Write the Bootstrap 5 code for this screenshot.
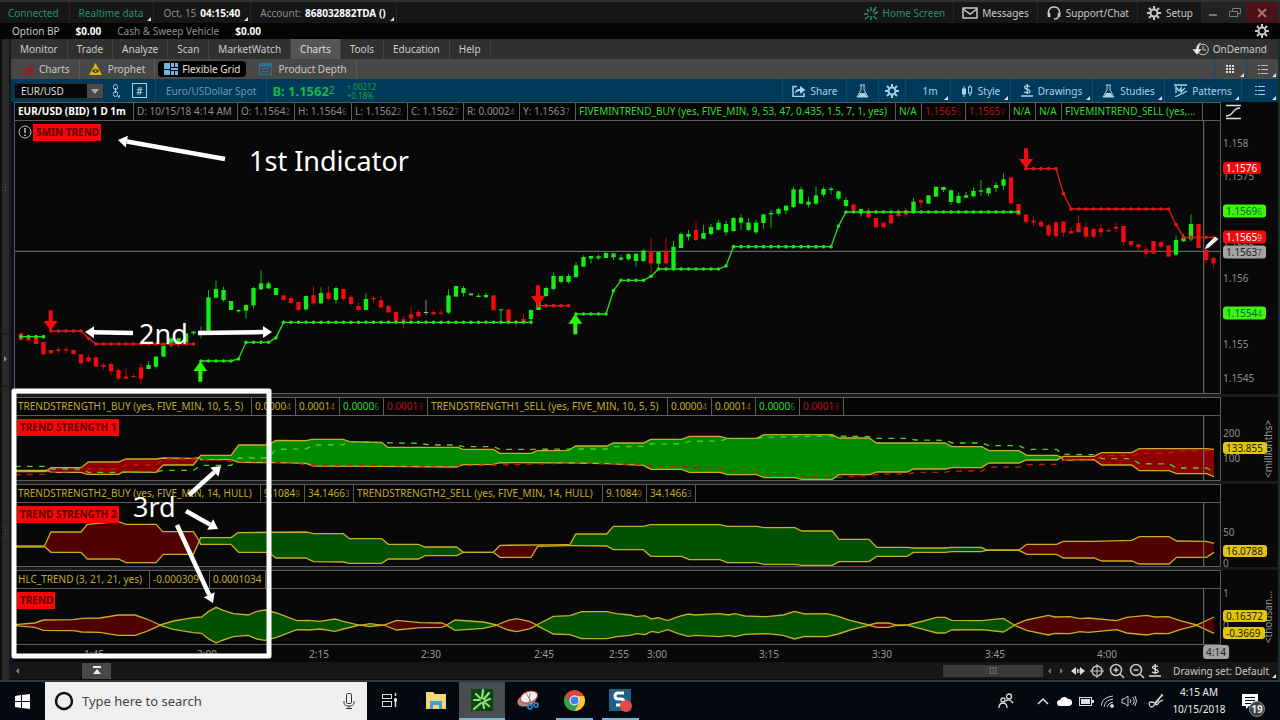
<!DOCTYPE html>
<html lang="en">
<head>
<meta charset="utf-8">
<meta name="viewport" content="width=device-width, initial-scale=1">
<title>Charts - Flexible Grid</title>
<link href="https://cdn.jsdelivr.net/npm/bootstrap@5.3.0/dist/css/bootstrap.min.css" rel="stylesheet">
<style>
:root{--line:#5c5c5c;--ink:#c9c9c9;--dim:#8c8c8c}
body{background:#080808;color:var(--ink);font:10px/14px "Noto Sans","Open Sans",sans-serif}
button,select,input{font:inherit;color:inherit}
a{color:inherit;text-decoration:none}
.bare{background:none;border:0;padding:0;white-space:nowrap;line-height:14px}
svg{display:block;flex:none}
.ico{width:16px;height:16px;fill:none;stroke:currentColor;stroke-width:1.5}
.statusbar{height:23px;border-top:2px solid #303030;background:#161616}
.statusbar .seg{height:100%;border-right:1px solid #262626;padding:0 10px 0 9px;position:relative;white-space:nowrap}
.statusbar .seg.act{padding:0 8px}
.seg.tick::after,.tool.tick::after,.setname::after{content:"";position:absolute;right:2px;bottom:2px;border-left:4px solid transparent;border-bottom:4px solid #ddd}
.setname{position:relative;padding-right:9px;height:18px}
.teal{color:#2b8f6a}
.bright{color:#fff;font-weight:700}
.winbtn{background:#222;color:#777;width:22px;height:100%;border:0;padding:0}
.winbtn.close-win{background:#4b1217;color:#a87075;width:32px}
.fundsbar{height:16px;background:#050505;padding:0 10px 0 12px}
.rail{width:11px;background:#292929;border-left:2px solid #101010;border-right:2px solid #191919}
.edge{width:2px;background:#1c2e2a}
.menu{height:20px;background:#303030}
.menu .tab{height:100%;padding:0 9px;border-right:1px solid #424242;color:#ccc}
.menu .tab.on{background:#555;color:#ddd}
.menu .demand{margin-right:11px}
.submenu{height:20px;background:#484848;color:#c8c8c8}
.submenu .tab{height:100%;padding:0 9px;border-right:1px solid #585858;gap:6px}
.submenu .tab.on{background:#000;border-radius:4px;height:16px;margin:2px 4px 2px 3px;color:#e4e4e4;border:0;padding:0 6px;gap:4px}
.toolbar{height:23px;background:#003a5a;color:#a9d2ea}
.tool{height:100%;border-left:1px solid #0c4c70;position:relative;gap:5px}
.t64{width:64px}.t32{width:32px}.t27{width:27px}.t45{width:45px}.t60{width:60px}.t82{width:82px}.t72{width:72px}.t77{width:77px}.t37{width:37px}
.symbol{width:90px;height:16px;background:#080808 linear-gradient(#4a4a4a,#4a4a4a) right/16px 100% no-repeat;border:1px solid #1d2c36;border-radius:0;padding:0 0 0 6px;appearance:none;color:#ddd;line-height:14px}
.pick{position:relative;margin-left:3px}
.pick::after{content:"";position:absolute;right:5px;top:6px;border:4px solid transparent;border-top:5px solid #aaa;border-bottom:0}
.hash{width:15px;height:15px;border:1px solid #a9d2ea;color:#d8ecf8;line-height:12px;margin-left:12px}
.instrument{color:#6b9ab5;padding:0 10px;margin-left:8px}
.quote{color:#18b848;font-weight:700;font-size:13px;padding:0 12px 0 5px}
.quote sup{font-size:10px;top:-2px;font-weight:400}
.delta{color:#18a048;font-size:8px;line-height:9px;gap:0}
.chartarea{background:#06102a;padding-left:3px;position:relative}
.strip{background:#1b1b1b;height:3px}
.plot{border:1px solid var(--line);border-top:0;background:#080808;position:relative;min-width:0}
.plot svg{position:absolute;inset:0;width:100%;height:100%}
.plot svg.alert-mark{width:14px;height:14px;left:3px;top:4px}
.legend-row{height:19px}
.legend-row .plot{border-top:1px solid var(--line);background:#050505}
.cell{border-right:1px solid var(--line);padding-left:3px;height:100%;white-space:nowrap;overflow:hidden;line-height:17px;flex:none}
.cell small{font-size:8px;opacity:.6}
.scale{width:57px;background:#080808;position:relative;color:var(--dim)}
.scale span{position:absolute;left:2px;transform:translateY(-50%);line-height:12px;white-space:nowrap}
.scale .tag{border-radius:3px;padding:0 4px 0 3px;left:2px;min-width:38px;z-index:1}
.tag small{font-size:8px;opacity:.7}
.tr{background:#f40a0a;color:#fff}.tg{background:#3cf50a;color:#063}.tw{background:#a3a3a3;color:#222}.ty{background:#e2c60c;color:#221c00}
.scale .upright{left:41px;top:50%;writing-mode:vertical-rl;transform:translateY(-50%) rotate(180deg);color:#999}
.c-y{color:#c2ac28}.c-g{color:#34d834}.c-r{color:#b81218}.c-d{color:var(--dim)}
.w119{width:119px}.w104{width:104px}.w57{width:57px}.w56{width:56px}.w320{width:320px}.w26{width:26px}.w44{width:44px}.w141{width:141px}.w237{width:237px}.w240{width:240px}.w246{width:246px}.w249{width:249px}.w49{width:49px}.w135{width:135px}.w60{width:60px}
.flag{position:absolute;left:2px;top:3px;background:#f80505;color:#5c0000;font-weight:700;padding:0 2px 0 3px;line-height:17px;z-index:1}
.pane-price{flex:1 0 273px}
.pane-a{height:65px}.pane-b{height:64px}.pane-c{height:56px}
.times{height:17px;background:#080808;position:relative;color:#999}
.times span{position:absolute;top:2px;transform:translateX(-50%)}
.times .now{background:#a3a3a3;color:#222;border-radius:3px;padding:0 3px;top:0}
.notes{position:absolute;inset:0;width:100%;height:100%;z-index:3;pointer-events:none}
.note{position:absolute;z-index:4;color:#fff;font-size:27px;line-height:32px;white-space:nowrap;transform:translateY(-50%)}
.scroller{height:18px;background:#161616;border-bottom:1px solid #0a0a0a}
.upbtn{width:29px;height:16px;background:#484848;color:#ddd;border:0;padding:0;margin-left:62px}
.thumb{width:100px;height:12px;background:#3a3a3a;color:#777;font-size:8px;line-height:11px}
.taskbar{height:40px;border-top:2px solid #35353a;background:#03090e;color:#eee}
.start{width:45px}
.search{width:322px;background:#f0f0f0;color:#333;padding:0 12px 0 9px;gap:8px}
.search input{background:none;border:0;font-size:13px;line-height:18px;padding:0;min-width:0;outline:0}
.search input::placeholder{color:#444;opacity:1}
.app{width:46px;background:none;border:0;padding:0 0 2px}
.app.run{background:linear-gradient(#76b5e4,#76b5e4) center bottom/37px 2px no-repeat}
.app.run.on{background:#4a4d50;box-shadow:inset 0 -2px #76b5e4}
.tray{gap:7px}
.clock{width:56px;line-height:17px}
.notify{margin:0 22px 0 8px}
.badge19{position:absolute;right:-7px;bottom:-8px;width:16px;height:16px;border-radius:50%;background:#3c4145;border:1px solid #888;line-height:14px;font-weight:700}
</style>
</head>
<body>
<div class="d-flex flex-column min-vh-100">

<header class="statusbar d-flex align-items-center">
  <div class="seg d-flex align-items-center teal ps-2">Connected</div>
  <div class="seg tick d-flex align-items-center teal">Realtime data</div>
  <div class="seg tick d-flex align-items-center gap-1"><span class="c-d">Oct, 15</span><span class="bright">04:15:40</span></div>
  <div class="seg tick d-flex align-items-center gap-1"><span class="c-d">Account:</span><span class="bright">868032882TDA ()</span></div>
  <a href="#" class="seg act d-flex align-items-center gap-1 teal ms-auto"><svg class="ico" viewBox="0 0 16 16"><path d="M8 6V2M10 7l3-5M11 9l4-2M10 11l4 3M8 11v4M6 11l-4 3M5 9H1M6 7L4 4"/></svg>Home Screen</a>
  <button class="bare seg act d-flex align-items-center gap-1 h-100"><svg class="ico" viewBox="0 0 16 16"><rect x="1" y="3" width="14" height="10"/><path d="M1 4l7 5 7-5"/></svg>Messages</button>
  <button class="bare seg act d-flex align-items-center gap-1"><svg class="ico" viewBox="0 0 16 16"><path d="M4 12C1 9 2 2 8 2s7 7 4 10M12 12c0 2-2 2-4 2" /><path d="M3 8v4M13 8v4" stroke-width="2.5"/></svg>Support/Chat</button>
  <button class="bare seg act d-flex align-items-center gap-1"><svg class="ico" viewBox="0 0 16 16"><circle cx="8" cy="8" r="3.5" stroke-width="2"/><path d="M8 1v3M8 12v3M1 8h3M12 8h3M3 3l2 2M11 11l2 2M13 3l-2 2M5 11l-2 2" stroke-width="2"/></svg>Setup</button>
  <button class="winbtn d-flex align-items-center justify-content-center" aria-label="Minimize"><svg width="10" height="10"><path d="M1 7h8" stroke="currentColor" stroke-width="2"/></svg></button>
  <button class="winbtn d-flex align-items-center justify-content-center" aria-label="Restore"><svg width="12" height="10" fill="none" stroke="currentColor"><path d="M3.500 3.500v-3h8v5h-3"/><rect x=".5" y="3.500" width="8" height="5"/></svg></button>
  <button class="winbtn close-win d-flex align-items-center justify-content-center" aria-label="Close"><svg width="10" height="10"><path d="M1 1l8 8M9 1l-8 8" stroke="currentColor" stroke-width="2"/></svg></button>
  <div class="edge h-100"></div>
</header>

<div class="fundsbar d-flex align-items-center">
  <span>Option BP</span><span class="bright ms-3">$0.00</span>
  <span class="c-d ms-3">Cash &amp; Sweep Vehicle</span><span class="bright ms-3">$0.00</span>
  <button class="bare ms-auto" aria-label="Settings"><svg class="ico" viewBox="0 0 16 16"><circle cx="8" cy="8" r="3.500" stroke-width="2"/><path d="M8 1v3M8 12v3M1 8h3M12 8h3M3 3l2 2M11 11l2 2M13 3l-2 2M5 11l-2 2" stroke-width="2"/></svg></button>
</div>

<div class="d-flex flex-grow-1">
  <div class="rail"><svg width="7" height="641"><g stroke="#151515"><path d="M0 294.500h7M0 347.500h7"/></g><path d="M2 317l3 3-3 3z" fill="#888"/><path d="M3.500 142v12M3.500 488v12" stroke="#555" stroke-dasharray="1 2"/></svg></div>
  <main class="d-flex flex-column flex-grow-1 overflow-hidden">

    <nav class="menu d-flex align-items-center">
      <a href="#" class="tab d-flex align-items-center">Monitor</a><a href="#" class="tab d-flex align-items-center">Trade</a><a href="#" class="tab d-flex align-items-center">Analyze</a><a href="#" class="tab d-flex align-items-center">Scan</a><a href="#" class="tab d-flex align-items-center">MarketWatch</a><a href="#" class="tab on d-flex align-items-center">Charts</a><a href="#" class="tab d-flex align-items-center">Tools</a><a href="#" class="tab d-flex align-items-center">Education</a><a href="#" class="tab d-flex align-items-center">Help</a>
      <button class="bare demand d-flex align-items-center gap-1 ms-auto"><svg width="17" height="14" viewBox="0 0 17 14" fill="none" stroke="currentColor"><circle cx="11" cy="7.500" r="5.300"/><path d="M11 4v4h3"/><path d="M10 0C6 1 4 4 4 7H0l5 6 5-6H7c0-3 1-5 3-7z" fill="#e8e8e8" stroke="#303030" stroke-width=".5"/></svg>OnDemand</button>
    </nav>

    <nav class="submenu d-flex align-items-center">
      <a href="#" class="tab d-flex align-items-center"><svg width="13" height="12" fill="#8d2228"><path d="M0 12V9h3v3zM3.500 12V6h3v6zM7 12V4h2v8zM10 12V0h3v12z"/></svg>Charts</a>
      <a href="#" class="tab d-flex align-items-center"><svg width="13" height="12"><path d="M6.500 0L13 12H0z" fill="#d8b800"/><path d="M3 8q3.500-4 7 0-3.500 4-7 0z" fill="#3a3000"/><circle cx="6.500" cy="8" r="1" fill="#d8b800"/></svg>Prophet</a>
      <a href="#" class="tab on d-flex align-items-center"><svg width="14" height="12" fill="#6cb8e0"><path d="M0 0h6v6H0zM0 7h6v5H0zM7 0h3v4H7zM11 0h3v4h-3zM7 5h7v2H7zM7 8h3v4H7zM11 8h3v4h-3z"/></svg>Flexible Grid</a>
      <a href="#" class="tab d-flex align-items-center"><svg width="13" height="12" fill="none" stroke="#26749c"><rect x=".5" y=".5" width="12" height="11"/><path d="M0 2h13" stroke-width="3"/><path d="M3 5.500h7M3 8.500h7"/></svg>Product Depth</a>
      <button class="bare tool tick t32 ms-auto d-flex align-items-center justify-content-center" aria-label="Grid layout"><svg width="9" height="9" fill="#ddd"><path d="M0 0h2v2H0zM3 0h2v2H3zM6 0h2v2H6zM0 3h2v2H0zM3 3h2v2H3zM6 3h2v2H6zM0 6h2v2H0zM3 6h2v2H3zM6 6h2v2H6z"/></svg></button>
      <button class="bare tool tick t32 d-flex align-items-center justify-content-center" aria-label="List"><svg width="10" height="9" fill="#bbb"><path d="M0 0h2v1H0zM3 0h7v1H3zM0 4h2v1H0zM3 4h7v1H3zM0 8h2v1H0zM3 8h7v1H3z"/></svg></button>
    </nav>

    <div class="toolbar d-flex align-items-center">
      <div class="pick"><select class="symbol" aria-label="Symbol"><option>EUR/USD</option></select></div>
      <svg class="ms-2" width="8" height="14" fill="none" stroke="#a9d2ea"><rect x="1.500" y=".5" width="4" height="5" rx="2"/><rect x="1.500" y="7.500" width="4" height="5" rx="2"/><path d="M3.500 4v5M6 13l2-2v2z"/></svg>
      <button class="bare hash text-center">#</button>
      <span class="tool instrument d-flex align-items-center">Euro/USDollar Spot</span>
      <span class="tool quote d-flex align-items-center"><span>B: 1.1562<sup>2</sup></span></span>
      <span class="tool delta d-flex flex-column justify-content-center border-0"><span>+.00212</span><span>+0.18%</span></span>
      <button class="bare tool t64 d-flex align-items-center justify-content-center ms-auto"><svg width="14" height="12" fill="none" stroke="currentColor" stroke-width="1.500"><path d="M5 1.500H1v10h11V8"/><path d="M3 9c0-4 2-5 5-5V1l5.500 4L8 9V6C6 6 4 7 3 9z" fill="currentColor" stroke="none"/></svg>Share</button>
      <button class="bare tool t32 d-flex align-items-center justify-content-center" aria-label="Studies menu"><svg width="13" height="14"><path d="M4 1h5M5 1v5L1 13h11L8 6V1" fill="none" stroke="currentColor"/><path d="M4 9h5l2 4H2z" fill="currentColor"/></svg></button>
      <button class="bare tool t27 d-flex align-items-center justify-content-center" aria-label="Chart settings"><svg class="ico" viewBox="0 0 16 16"><circle cx="8" cy="8" r="3.500" stroke-width="2"/><path d="M8 1v3M8 12v3M1 8h3M12 8h3M3 3l2 2M11 11l2 2M13 3l-2 2M5 11l-2 2" stroke-width="2"/></svg></button>
      <button class="bare tool tick t45 d-flex align-items-center justify-content-center ps-1">1m</button>
      <button class="bare tool tick t60 d-flex align-items-center justify-content-center"><svg width="12" height="12" fill="none" stroke="currentColor"><path d="M3 1v11M9 0v2M9 8v3"/><rect x="1.500" y="4" width="3" height="5" fill="currentColor"/><rect x="7.500" y="2" width="3" height="6"/></svg>Style</button>
      <button class="bare tool tick t82 d-flex align-items-center justify-content-center"><svg width="12" height="13" fill="none" stroke="currentColor"><path d="M9 2.500C7 1.500 3.500 1.500 3.500 3.500S9 5 9 7.200 5 9 3 8M6.200 0v10M0 12h12" stroke-width="1.300"/></svg>Drawings</button>
      <button class="bare tool tick t72 d-flex align-items-center justify-content-center"><svg width="13" height="14"><path d="M4 1h5M5 1v5L1 13h11L8 6V1" fill="none" stroke="currentColor"/><path d="M4 9h5l2 4H2z" fill="currentColor"/></svg>Studies</button>
      <button class="bare tool tick t77 d-flex align-items-center justify-content-center"><svg width="13" height="13" fill="none" stroke="currentColor" stroke-width="1.300"><path d="M0 1h13M2 9V3l3 4 2-3v4l4-4M1 13l12-6"/></svg>Patterns</button>
      <button class="bare tool tick t37 d-flex align-items-center justify-content-center" aria-label="More"><svg width="10" height="10" fill="currentColor"><path d="M0 0h2v1H0zM3 0h7v1H3zM0 4h2v1H0zM3 4h7v1H3zM0 8h2v1H0zM3 8h7v1H3z"/></svg></button>
    </div>

    <section class="chartarea d-flex flex-column flex-grow-1">
      <div class="legend-row d-flex">
        <div class="plot d-flex flex-grow-1 c-d">
          <div class="cell w119 bright">EUR/USD (BID) 1 D 1m</div><div class="cell w104">D: 10/15/18 4:14 AM</div><div class="cell w57">O: 1.1564<small>2</small></div><div class="cell w57">H: 1.1564<small>6</small></div><div class="cell w56">L: 1.1562<small>2</small></div><div class="cell w56">C: 1.1562<small>7</small></div><div class="cell w56">R: 0.0002<small>4</small></div><div class="cell w56">Y: 1.1563<small>7</small></div><div class="cell w320 c-g">FIVEMINTREND_BUY (yes, FIVE_MIN, 9, 53, 47, 0.435, 1.5, 7, 1, yes)</div><div class="cell w26 c-g">N/A</div><div class="cell w44 c-r">1.1565<small>5</small></div><div class="cell w44 c-r">1.1565<small>9</small></div><div class="cell w26 c-g">N/A</div><div class="cell w26 c-g">N/A</div><div class="cell w141 c-g">FIVEMINTREND_SELL (yes,...</div>
        </div>
        <div class="scale d-flex align-items-center"><svg class="ms-1" width="17" height="16" fill="none" stroke="#ddd" stroke-width="1.300"><path d="M1 1.500h15M1 14.500h15M1 12c8 0 6-8 14-8"/></svg></div>
      </div>
      <div class="pane-price d-flex">
        <div class="plot flex-grow-1">
          <svg id="price" viewBox="45 3 3615 816" preserveAspectRatio="none"></svg>
          <svg class="alert-mark" viewBox="0 0 14 14" fill="none" stroke="#bbb"><circle cx="7" cy="7" r="6"/><path d="M7 3v5M7 9.500v1.500" stroke-width="1.600"/></svg>
          <div class="flag ms-3">5MIN TREND</div>
        </div>
        <div class="scale" data-top="121" data-h="273" data-labels="143:1.158,176:1.1575,245:1.1565,278:1.156,344:1.155,378:1.1545,168:1.1576:tr,211:1.1569|6:tg,237:1.1565|9:tr,252:1.1563|7:tw,313:1.1554|4:tg"></div>
      </div>
      <div class="strip"></div>
      <div class="legend-row d-flex">
        <div class="plot d-flex flex-grow-1 c-y">
          <div class="cell w237">TRENDSTRENGTH1_BUY (yes, FIVE_MIN, 10, 5, 5)</div><div class="cell w44">0.0000<small>4</small></div><div class="cell w44">0.0001<small>4</small></div><div class="cell w44 c-g">0.0000<small>6</small></div><div class="cell w44 c-r">0.0001<small>3</small></div><div class="cell w240">TRENDSTRENGTH1_SELL (yes, FIVE_MIN, 10, 5, 5)</div><div class="cell w44">0.0000<small>4</small></div><div class="cell w44">0.0001<small>4</small></div><div class="cell w44 c-g">0.0000<small>6</small></div><div class="cell w44 c-r">0.0001<small>3</small></div>
        </div><div class="scale"></div>
      </div>
      <div class="pane-a d-flex">
        <div class="plot flex-grow-1"><svg id="ts1" viewBox="45 93 3615 192" preserveAspectRatio="none"></svg><div class="flag">TREND STRENGTH 1</div></div>
        <div class="scale" data-top="416" data-h="65" data-labels="433:200,458:100,448:133.855:ty"><span class="upright">&lt;millionths&gt;</span></div>
      </div>
      <div class="strip"></div>
      <div class="legend-row d-flex">
        <div class="plot d-flex flex-grow-1 c-y">
          <div class="cell w246">TRENDSTRENGTH2_BUY (yes, FIVE_MIN, 14, HULL)</div><div class="cell w44">9.1084<small>9</small></div><div class="cell w49">34.1466<small>3</small></div><div class="cell w249">TRENDSTRENGTH2_SELL (yes, FIVE_MIN, 14, HULL)</div><div class="cell w44">9.1084<small>9</small></div><div class="cell w49">34.1466<small>3</small></div>
        </div><div class="scale"></div>
      </div>
      <div class="pane-b d-flex">
        <div class="plot flex-grow-1"><svg id="ts2" viewBox="45 354 3615 189" preserveAspectRatio="none"></svg><div class="flag">TREND STRENGTH 2</div></div>
        <div class="scale" data-top="503" data-h="64" data-labels="532:50,563:0,551:16.0788:ty"></div>
      </div>
      <div class="strip"></div>
      <div class="legend-row d-flex">
        <div class="plot d-flex flex-grow-1 c-y">
          <div class="cell w135">HLC_TREND (3, 21, 21, yes)</div><div class="cell w60">-0.000309</div><div class="cell w56">0.0001034</div>
        </div><div class="scale"></div>
      </div>
      <div class="pane-c d-flex">
        <div class="plot flex-grow-1"><svg id="hlc" viewBox="45 612 3615 165" preserveAspectRatio="none"></svg><div class="flag">TREND</div></div>
        <div class="scale" data-top="589" data-h="56" data-labels="593:1,625:0,616:0.16372:ty,633:-0.3669:ty"><span class="upright">&lt;thousan...</span></div>
      </div>
      <div class="times" id="times"></div>

      <svg class="notes" viewBox="11 102 1267 560" preserveAspectRatio="none">
        <rect x="14" y="391" width="255" height="265" fill="none" stroke="#fff" stroke-width="5" stroke-linejoin="round"/>
        <g id="arrows" fill="#fff" stroke="#fff"></g>
        <path d="M1204 250l2-5 9-9 4 3-10 9z" fill="#eee" stroke="#222"/>
      </svg>
      <div id="notetext"></div>
    </section>

    <div class="scroller d-flex align-items-center">
      <svg class="ms-1" width="5" height="6"><path d="M4 0v6L1 3z" fill="#888"/></svg>
      <button class="upbtn d-flex align-items-center justify-content-center" aria-label="Expand"><svg width="8" height="9" fill="#eee"><path d="M0 0h8v2H0zM4 3l4 5H0z"/></svg></button>
      <div class="thumb ms-auto text-center">III</div>
      <svg class="ms-1" width="20" height="8" fill="#777"><path d="M4 1v6L1 4zM13 1v6l3-3z"/></svg>
      <div class="d-flex align-items-center gap-1 ms-1">
      <svg width="14" height="10" fill="#ddd"><path d="M0 5l5-4v8zM14 5L9 1v8zM6 3h1v4H6zM7.500 3h1v4h-1z"/></svg>
      <svg class="ico" viewBox="0 0 16 16"><circle cx="8" cy="8" r="5"/><path d="M8 1v14M1 8h14" stroke-width="1"/></svg>
      <svg class="ico" viewBox="0 0 16 16"><circle cx="7" cy="7" r="5.500"/><path d="M11 11l4 4M4.500 7h5M7 4.500v5"/></svg>
      <svg class="ico" viewBox="0 0 16 16"><circle cx="7" cy="7" r="5.500"/><path d="M11 11l4 4M4.500 7h5"/></svg>
      <svg width="12" height="13" fill="none" stroke="#ddd"><path d="M9 2.500C7 1.500 3.500 1.500 3.500 3.500S9 5 9 7.200 5 9 3 8M6.200 0v10M0 12h12" stroke-width="1.300"/></svg>
      </div>
      <button class="bare setname ms-2 ps-1">Drawing set: Default</button>
    </div>
  </main>
  <div class="edge"></div>
</div>

<footer class="taskbar d-flex">
  <button class="bare start d-flex align-items-center justify-content-center" aria-label="Start"><svg width="15" height="15" fill="#fff"><path d="M0 2l6-1v6H0zM7 1l8-1v7H7zM0 8h6v6l-6-1zM7 8h8v7l-8-1z"/></svg></button>
  <label class="search d-flex align-items-center"><svg width="20" height="20"><circle cx="10" cy="10" r="8" fill="none" stroke="#111" stroke-width="2.500"/></svg><input class="flex-grow-1" type="text" placeholder="Type here to search" aria-label="Search"><svg width="12" height="16" fill="none" stroke="#333"><rect x="3.500" y=".5" width="5" height="10" rx="1"/><path d="M1 8v2q0 3 5 3t5-3V8M6 13v3M3 15.500h6"/></svg></label>
  <button class="app d-flex align-items-center justify-content-center" aria-label="Task view"><svg width="16" height="15" fill="none" stroke="#ddd"><rect x=".5" y="1.500" width="9" height="4"/><rect x=".5" y="8.500" width="9" height="5"/><path d="M13.500 0v3M13.500 5v9" stroke-width="1.500"/><path d="M12 7h3" stroke-width="3"/></svg></button>
  <button class="app d-flex align-items-center justify-content-center" aria-label="File Explorer"><svg width="20" height="18"><path d="M0 1h7l2 2h11v15H0z" fill="#f3d678"/><path d="M4 18v-8h12v8h-3v-4H7v4z" fill="#3ea2d8"/></svg></button>
  <button class="app on run d-flex align-items-center justify-content-center" aria-label="Trading platform"><svg width="22" height="22"><path d="M0 0h22v22H0z" fill="#0b4416"/><g stroke="#8ee070" stroke-width="2.200" stroke-linecap="round"><path d="M11 9L12 1M13 10l5-6M14 12l5-2M13 13l5 4M12 14l1 5M10 14l-7 6M9 11H3M9 9L5 5"/></g></svg></button>
  <button class="app d-flex align-items-center justify-content-center" aria-label="Snipping Tool"><svg width="22" height="20"><ellipse cx="10" cy="10" rx="10" ry="6" transform="rotate(-20 10 10)" fill="#a88"/><ellipse cx="12" cy="7" rx="9" ry="5.500" transform="rotate(-20 12 7)" fill="#f1f1f1" stroke="#c33"/><path d="M9 3l7 12M13 3l-1 12" stroke="#888"/><g fill="none" stroke="#2a7fc0" stroke-width="1.800"><circle cx="13" cy="17" r="2"/><circle cx="19" cy="15" r="2"/></g></svg></button>
  <button class="app run d-flex align-items-center justify-content-center" aria-label="Chrome"><svg width="21" height="21" viewBox="-10.500 -10.500 21 21"><circle r="10.500" fill="#e0443a"/><path d="M-9.100-5.200A10.500 10.500 0 0 0 0 10.500L4.500 2.600-4.500 2.600z" fill="#2fa350"/><path d="M9.500-4.500A10.500 10.500 0 0 1 0 10.500L5 2 3-4.500z" fill="#f7c82e"/><circle r="5" fill="#fff"/><circle r="4" fill="#3f7fe8"/></svg></button>
  <button class="app run d-flex align-items-center justify-content-center" aria-label="Recorder"><svg width="23" height="23"><path d="M0 0h22v22H0z" fill="#1f6183"/><path d="M15 4H9q-3 0-3 3t3 3h3q3 0 3 3t-3 3H7" fill="none" stroke="#fff" stroke-width="3"/><circle cx="17" cy="17" r="6" fill="#e54848"/></svg></button>
  <div class="tray d-flex align-items-center ms-auto">
    <svg class="me-3" width="16" height="16" fill="none" stroke="#ddd" stroke-width="1.300"><circle cx="5" cy="7" r="2"/><circle cx="11" cy="3.500" r="2.500"/><path d="M1 15q0-5 4-5t4 5M8 8q3-3 7 2"/></svg>
    <svg width="12" height="8" fill="none" stroke="#ddd" stroke-width="1.500"><path d="M1 7l5-5 5 5"/></svg>
    <svg width="16" height="10" fill="#fff"><path d="M4 10a3 3 0 0 1 0-6 4.500 4.500 0 0 1 8-1 3.500 3.500 0 0 1 1 7z"/></svg>
    <svg width="15" height="9" fill="none" stroke="#ddd"><rect x=".5" y=".5" width="12" height="8"/><path d="M2 2h9v5H2zM13 3h2v3h-2z" fill="#ddd" stroke="none"/></svg>
    <svg width="13" height="13" fill="none" stroke="#ccc"><path d="M0 11Q1 2 12 1M3 12q1-7 9-8M6 12q1-4 6-5"/><circle cx="11" cy="11" r="1.500" fill="#ccc"/></svg>
    <svg width="16" height="12" fill="none" stroke="#ccc"><path d="M1 4h2l4-3v10L3 8H1zM9 4q2 2 0 4M11.500 2q3.500 4 0 8M14 1q3 5 0 10"/></svg>
    <svg class="ms-1" width="16" height="14" fill="none" stroke="#ddd" stroke-width="1.300"><path d="M7 9Q-1 6 2 12q2 3 6-3l6-8-7 8q2 4 4-1l4-2M13 0l2 2"/></svg>
    <div class="clock text-center"><div>4:15 AM</div><div>10/15/2018</div></div>
    <button class="bare notify position-relative" aria-label="Notifications"><svg width="16" height="15" fill="#fff"><path d="M0 0h16v12H7l-3 3v-3H0z"/><path d="M3 3h10v1H3zM3 6h10v1H3zM3 9h6v1H3z" fill="#03090e"/></svg><span class="badge19">19</span></button>
  </div>
</footer>
</div>

<script src="https://cdn.jsdelivr.net/npm/bootstrap@5.3.0/dist/js/bootstrap.bundle.min.js"></script>
<script>
// Chart data. One candle: colour, body top, body bottom, wick top, wick bottom.
const candles = `r640,660,637,664;r654,662;r654,672;r666,703;r690,700;r688,693,681,700;r688,692,681,700;r690,702;r703,730,703,735;r712,724,706,728;r712,740;r735,740,728,748;r732,754,726,766;r750,776,745,782;r770,776,745,776;r768,771,760,774;r742,776,730,793;g735,747,723,747;g710,740,708,746;g677,710;g655,676,655,682;g655,668,655,680;g640,668;g635,640,632,645;g634,638,620,655;g532,637,510,637;g507,533,482,535;g510,540,500,545;g543,570;g570,574,568,578;g555,572,553,596;g504,556,500,565;g490,508,450,510;g490,505,484,508;g504,525;r526,540;r534,549,526,550;r546,570,546,574;g528,568,526,572;r526,550,498,556;g519,550,502,552;r518,537,498,542;g504,540,500,550;r507,537,507,542;r531,552,526,556;r558,570,546,574;g537,570,520,570;r534,538,528,548;r541,562,528,566;r558,577,555,580;r576,604;r598,604,590,626;r583,596,560,603;r576,589,569,592;w576,579,540,586;r576,583,570,586;r578,581,568,586;g526,578,508,582;g498,530;g504,519,498,530;g520,526;g527,531,520,531;g525,532,518,533;r526,571;g568,571,568,605;r568,604;r604,608,600,622;r597,607,582,610;g570,597,568,604;g540,570;g504,528,500,532;g468,507,458,512;g468,486,468,490;g468,486,462,491;g436,471,426,474;g411,440,406,440;g408,416,408,430;g409,415,404,420;g399,414,396,414;g400,412,400,420;g413,419,405,422;g402,418,400,422;g401,423,401,440;g392,423,388,426;r393,430,355,460;g396,431,396,442;r392,430,352,432;g380,444,363,446;g342,384,337,384;g342,350,330,362;r330,360,305,364;g339,356,314,356;g321,342,311,346;g308,329,300,332;g312,337,302,347;g294,333,291,335;g293,308,282,330;g308,330,294,333;g308,337,300,342;g283,309,283,326;g279,283,270,323;g267,281,262,286;g257,272,257,283;g208,261,200,264;g208,251,200,252;g245,254,230,262;g226,251,200,256;g207,224,200,230;g206,210,200,223;g214,236,212,242;g240,258,232,262;r254,271,250,274;g267,280,267,290;r274,292,264,298;r294,322;r308,322;r285,310,280,314;r276,288,268,293;r272,284,264,292;g245,277,234,280;r241,248,236,265;g226,251;g200,230;g201,210,200,216;g211,246,208,255;g228,249,218,252;g226,233,216,235;g213,229,202,232;g211,215,180,228;g204,220,200,228;g195,204,186,216;g178,197,160,210;r172,250;r252,285;r284,306,282,312;r302,307,286,318;r306,319,300,322;r316,346,312,350;r307,348,304,352;r305,338,304,350;r333,340,322,342;r309,336,286,340;r321,350,310,356;r327,350,324,356;r325,337,314,350;r330,334,324,336;r320,326,308,336;r318,366,318,376;r363,374,363,380;r373,382,373,396;r388,401,380,412;r363,401;r366,380,363,384;r376,410;g360,404,346,408;g354,364,342,366;g312,358,283,364;r312,384;r390,420,390,428;r414,430,410,446`.split(";");
const X = k => 63 + 22.5 * k;
const ink = {r:"#f00c0c", g:"#14ee14", w:"#aaa"};
const cross = (a, b) => `<path d="M3611 ${a}V${b}" stroke="#777" stroke-width="3"/>`;
let s = `<path d="M45 394H3660" stroke="#777" stroke-width="3"/>` + cross(0, 830);
candles.forEach((c, k) => {
  const [t, b, wt, wb] = c.slice(1).split(",").map(Number), f = ink[c[0]], x = X(k);
  if (wt) s += `<path d="M${x} ${wt}V${wb}" stroke="${f}" stroke-width="3" opacity=".75"/>`;
  s += `<rect x="${x - 6.5}" y="${t}" width="13" height="${b - t}" fill="${f}"/>`;
});
// Trend steps: colour, then first-last candle : level.
const trends = [["#25e01c","0-3:650"],["#e01818","4-8:633 9:655 10-23:672"],["#25e01c","24-28:723 29:717 30-33:667 34:653 35-68:607"],["#e01818","69-73:557"],["#25e01c","74-78:582 79:512 80-83:481 84:469 85-93:447 94:438 95-108:380 109:318 110-133:276"],["#e01818","134-138:146 139:221 140-153:267 154:314 155-159:352"]];
trends.forEach(([f, d]) => {
  const p = [];
  d.split(" ").forEach(r => { const [ks, y] = r.split(":"), [a, b = a] = ks.split("-"); for (let k = +a; k <= +b; k++) p.push([X(k), +y]); });
  s += `<polyline points="${p.join(" ")}" fill="none" stroke="${f}" stroke-width="4"/>` + p.map(q => `<circle cx="${q[0]}" cy="${q[1]}" r="5.5" fill="${f}"/>`).join("");
});
[[152,632,-1],[601,724,1],[1614,557,-1],[1726,582,1],[3078,146,-1]].forEach(([x, y, d]) => {
  s += `<path d="M${x} ${y}l21 ${29*d}h-15v${32*d}h-12v${-32*d}h-15z" fill="${d > 0 ? "#2cf50c" : "#f80808"}"/>`;
});
price.innerHTML = s;

// A band is an upper and a lower edge with a fill between.
const pts = t => t.trim().split(" ");
const band = (fill, up, lo) => `<polygon points="${[...pts(up), ...pts(lo).reverse()].join(" ")}" fill="${fill}"/><polyline points="${up}" class="e"/><polyline points="${lo}" class="e"/>`;
const edge = `<style>.e{fill:none;stroke:#c9ae20;stroke-width:4}</style>`;
const dash = (c, p) => `<polyline points="${p}" fill="none" stroke="${c}" stroke-width="4" stroke-dasharray="17 19"/>`;
const G1 = "#008a00", R1 = "#8e0000", G2 = "#005200", R2 = "#510000";
ts1.innerHTML = edge
 + band("#556b00","45,256 135,256 144,255","45,260 135,260 144,257")
 + band(R1,"144,255 153,248 243,248 265,231 355,231 378,222 468,222 490,219 580,220 597,218","144,257 153,262 243,262 262,268 355,268 370,261 468,262 490,240 580,240 597,218")
 + band(G1,"597,218 602,211 693,211 716,180 805,180 828,166 918,167 935,163 1030,163 1048,170 1145,172 1163,187 1375,187 1388,193 1480,193 1500,205 1593,205 1612,197 1705,196 1727,183 1820,183 1840,174 1930,174 1952,163 2045,163 2068,154 2160,154 2182,160 2270,160 2292,149 2497,149 2517,159 2607,159 2630,174 2835,174 2855,185 2945,185 2967,197 3057,197 3080,211 3170,211 3185,217","597,218 602,224 693,224 716,232 828,233 918,235 940,243 1145,244 1370,246 1390,239 1480,238 1500,233 1720,234 1820,236 1930,241 1952,253 2045,253 2068,262 2160,262 2182,269 2270,269 2292,278 2385,278 2405,283 2497,283 2517,269 2610,269 2630,261 2722,261 2740,252 2835,252 2857,248 2945,248 2967,234 3057,234 3080,225 3170,225 3185,217")
 + band(R1,"3185,217 3190,214 3282,214 3305,203 3395,203 3418,191 3620,191 3642,193","3185,217 3190,226 3282,224 3305,240 3395,240 3418,257 3507,257 3530,266 3620,266 3642,275")
 + dash("#4fce32","45,244 140,244 153,252 243,252 265,262 468,262 490,256 580,256 602,241 693,241 716,219 805,219 828,193 918,192 940,180 1030,179 1048,170 1145,173 1260,175 1290,180 1370,180 1390,185 1480,185 1500,193 1600,193 1727,192 1820,192 1840,185 1930,184 1952,177 2045,176 2068,169 2160,168 2182,161 2270,161 2292,157 2497,153 2607,155 2630,160 2722,160 2745,165 2835,166 2857,174 2945,174 2967,182 3057,182 3080,193 3170,193 3185,208 3282,209 3305,221 3395,221 3418,236 3507,237 3530,249 3620,249 3642,262")
 + dash("#c21a10","45,269 140,268 150,262 243,258 265,252 355,252 378,240 468,240 490,222 580,222 716,230 805,230 940,240 1145,241 1270,243 1500,240 1720,234 1850,237 1940,238 1952,243 2045,243 2068,248 2160,249 2182,258 2270,260 2300,266 2385,266 2405,275 2497,278 2550,275 2607,272 2630,268 2722,267 2745,262 2835,262 2857,258 2945,258 2967,246 3057,246 3080,239 3170,238 3190,226 3282,226 3305,212 3395,212 3418,205 3507,205 3530,198 3642,196")
 + cross(90, 290);
ts2.innerHTML = edge
 + band("#556b00","45,483 133,483","45,486 133,486")
 + band(R2,"133,484 153,441 243,441 262,418 355,410 378,418 468,418 488,440 580,440 598,468","133,484 153,502 243,502 262,522 355,522 378,533 468,533 490,508 580,508 598,468")
 + band(G2,"598,468 602,458 693,458 714,443 918,441 940,446 1030,446 1048,461 1145,461 1165,478 1255,478 1275,486 1370,486 1390,502 1480,502","598,468 602,478 693,478 716,502 805,502 828,519 918,519 940,530 1030,531 1048,535 1145,535 1165,522 1255,522 1275,512 1370,512 1390,502 1480,502")
 + band(R2,"1480,502 1500,481 1705,479 1708,482","1480,502 1500,517 1593,517 1613,484 1708,482")
 + band(G2,"1708,482 1727,447 1820,447 1840,424 1930,424 1952,419 2160,419 2182,424 2270,424 2292,428 2385,428 2405,438 2497,438 2517,463 2607,463 2630,487 2722,487 2740,489 2835,489 2855,487 2945,487 2960,495 3057,495","1708,482 1820,483 1840,494 1930,494 1952,514 2045,514 2068,524 2160,524 2182,533 2270,533 2292,538 2385,538 2405,541 2497,541 2517,530 2607,530 2630,514 2722,514 2740,502 2835,502 2855,500 2945,500 2960,496 3057,496")
 + band(R2,"3057,495 3080,478 3170,478 3190,469 3282,469 3395,466 3418,455 3507,455 3530,468 3620,469 3642,475","3057,496 3080,508 3170,508 3190,519 3282,519 3305,528 3395,528 3418,537 3507,537 3530,517 3620,517 3642,502")
 + cross(350, 550);
const mirror = (fill, up) => band(fill, up, pts(up).map(p => { const [x, y] = p.split(","); return `${x},${1441 - y}`; }).join(" "));
hlc.innerHTML = edge
 + mirror(R2,"45,719 105,714 130,705 220,704 245,700 300,699 355,690 405,690 440,702 480,720")
 + mirror(G2,"480,720 520,708 580,698 605,696 625,680 648,667 670,676 700,686 745,690 770,679 795,675 830,684 890,707 925,706 960,709 1005,702 1030,709 1080,721 1110,716 1150,721")
 + mirror(R2,"1150,721 1190,706 1260,713 1325,714 1340,720")
 + mirror(G2,"1340,720 1365,705 1450,711 1490,720")
 + mirror(R2,"1490,720 1525,706 1550,701 1590,710 1610,720")
 + mirror(G2,"1610,720 1660,694 1710,692 1745,680 1820,680 1850,686 1890,690 1910,695 1935,692 1955,702 1975,698 2003,707 2035,695 2065,687 2085,690 2160,686 2185,690 2205,686 2235,693 2300,695 2350,690 2383,679 2415,687 2480,686 2515,694 2550,706 2607,720")
 + mirror(R2,"2607,720 2630,714 2665,714 2685,719 2722,720")
 + mirror(G2,"2722,720 2770,708 2810,697 2835,697 2855,706 2945,707 3010,700 3043,720")
 + mirror(R2,"3043,720 3080,705 3145,691 3165,696 3210,695 3240,701 3265,699 3350,707 3380,697 3440,691 3465,696 3505,695 3540,707 3590,720 3642,696")
 + cross(610, 780);

// Price scales.
document.querySelectorAll(".scale[data-labels]").forEach(el => {
  el.dataset.labels.split(",").forEach(l => {
    const [y, txt, tag] = l.split(":"), [a, b] = txt.split("|"), n = document.createElement("span");
    if (tag) n.className = "tag " + tag;
    n.textContent = a;
    if (b) { const m = document.createElement("small"); m.textContent = b; n.append(m); }
    n.style.top = (y - el.dataset.top) / el.dataset.h * 100 + "%";
    el.append(n);
  });
});
// Time axis.
[[94,"1:45"],[207,"2:00"],[319,"2:15"],[431,"2:30"],[544,"2:45"],[619,"2:55"],[657,"3:00"],[769,"3:15"],[882,"3:30"],[995,"3:45"],[1107,"4:00"],[1216,"4:14"]].forEach(([x, t]) => {
  const n = document.createElement("span");
  n.textContent = t; n.style.left = (x - 14) / 1264 * 100 + "%";
  if (x === 1216) n.className = "now";
  times.append(n);
});
// Presenter's notes: arrows run from tail to head.
arrows.innerHTML = [[225,159,118,140],[133,333,85,332],[198,333,272,332],[189,495,221,466],[186,511,218,529],[177,525,213,603]].map(([a, b, c, d]) => {
  const l = Math.hypot(c - a, d - b), u = (c - a) / l, v = (d - b) / l, ex = c - u * 9, ey = d - v * 9;
  return `<path d="M${a} ${b}L${ex} ${ey}" stroke-width="4.500"/><path d="M${c} ${d}L${ex - v * 6} ${ey + u * 6}L${ex + v * 6} ${ey - u * 6}z" stroke="none"/>`;
}).join("");
[[249,161,"1st Indicator"],[139,334,"2nd"],[133,507,"3rd"]].forEach(([x, y, t]) => {
  const n = document.createElement("div");
  n.className = "note"; n.textContent = t;
  n.style.left = (x - 11) / 1267 * 100 + "%"; n.style.top = (y - 102) / 560 * 100 + "%";
  notetext.append(n);
});
</script>
</body>
</html>
